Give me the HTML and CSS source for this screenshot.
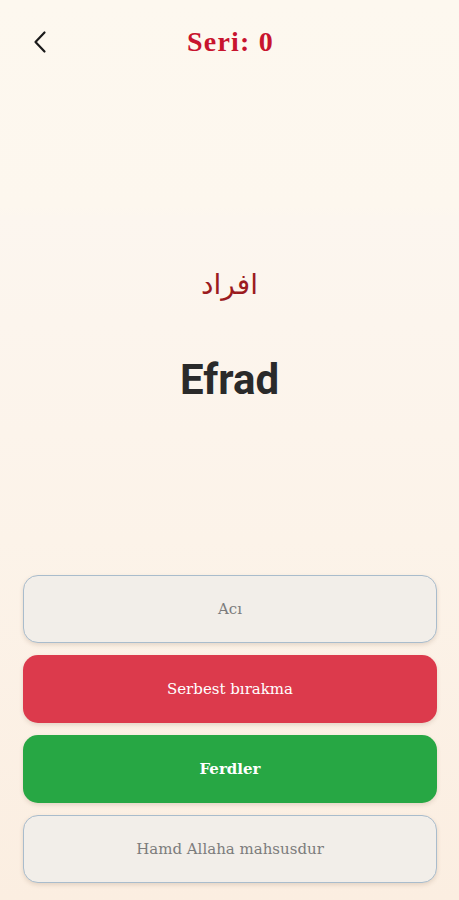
FILE: index.html
```html
<!DOCTYPE html>
<html lang="tr">
<head>
<meta charset="utf-8">
<title>Seri</title>
<link rel="stylesheet" href="styles.css">
</head>
<body>
<div class="screen">
  <header class="topbar">
    <button class="back" aria-label="Geri">
      <svg width="14" height="24" viewBox="0 0 14 24"><path d="M11.5 2.5 L2.5 12 L11.5 21.5" fill="none" stroke="#1a1a1a" stroke-width="2.2" stroke-linecap="round" stroke-linejoin="round"/></svg>
    </button>
    <h1 class="title">Seri: 0</h1>
  </header>
  <section class="word">
    <div class="arabic" lang="ar" dir="rtl">افراد</div>
    <div class="latin">Efrad</div>
  </section>
  <section class="options">
    <button class="opt neutral">Acı</button>
    <button class="opt wrong">Serbest bırakma</button>
    <button class="opt right">Ferdler</button>
    <button class="opt neutral">Hamd Allaha mahsusdur</button>
  </section>
</div>
</body>
</html>
```
FILE: styles.css
```css
html, body {
  margin: 0;
  padding: 0;
}
body {
  width: 459px;
  height: 900px;
  overflow: hidden;
  background: linear-gradient(180deg, #fdf8ef 0%, #fdf7ee 23%, #fcf6ef 24%, #fcf3e9 60%, #fbeee1 100%);
  font-family: "DejaVu Serif", "Liberation Serif", serif;
}
.screen {
  display: flex;
  flex-direction: column;
  height: 900px;
}
.topbar {
  height: 84px;
  display: flex;
  align-items: center;
  justify-content: center;
  position: relative;
}
.back {
  position: absolute;
  left: 32px;
  top: 29px;
  width: 16px;
  height: 26px;
  padding: 0;
  border: none;
  background: transparent;
  display: flex;
  align-items: center;
  justify-content: center;
}
.title {
  margin: 0;
  font-family: "Liberation Serif", "DejaVu Serif", serif;
  font-weight: 700;
  font-size: 28px;
  color: #c8142e;
  letter-spacing: 1.2px;
  line-height: 1;
  padding-left: 2px;
}
.word {
  margin-top: 176px;
  display: flex;
  flex-direction: column;
  align-items: center;
}
.arabic {
  height: 50px;
  line-height: 50px;
  font-family: "DejaVu Sans", "Noto Sans", sans-serif;
  font-size: 28px;
  color: #9b1b1f;
}
.latin {
  margin-top: 45px;
  height: 50px;
  line-height: 50px;
  font-family: Roboto, "Liberation Sans", sans-serif;
  font-weight: 700;
  font-size: 42px;
  color: #2a2a2a;
}
.options {
  margin-top: 170px;
  padding: 0 22px 0 23px;
  display: flex;
  flex-direction: column;
  gap: 12px;
}
.opt {
  height: 68px;
  border-radius: 15px;
  font-family: "DejaVu Serif", "Liberation Serif", serif;
  font-size: 15px;
  border: none;
  box-shadow: 0 2px 4px rgba(120, 90, 60, 0.18);
}
.neutral {
  background: #f2eee9;
  border: 1.5px solid #a9bccc;
  color: #7c7c7c;
}
.wrong {
  background: #dc3a4c;
  color: #ffffff;
}
.right {
  background: #27a744;
  color: #ffffff;
  font-weight: 700;
}
```
